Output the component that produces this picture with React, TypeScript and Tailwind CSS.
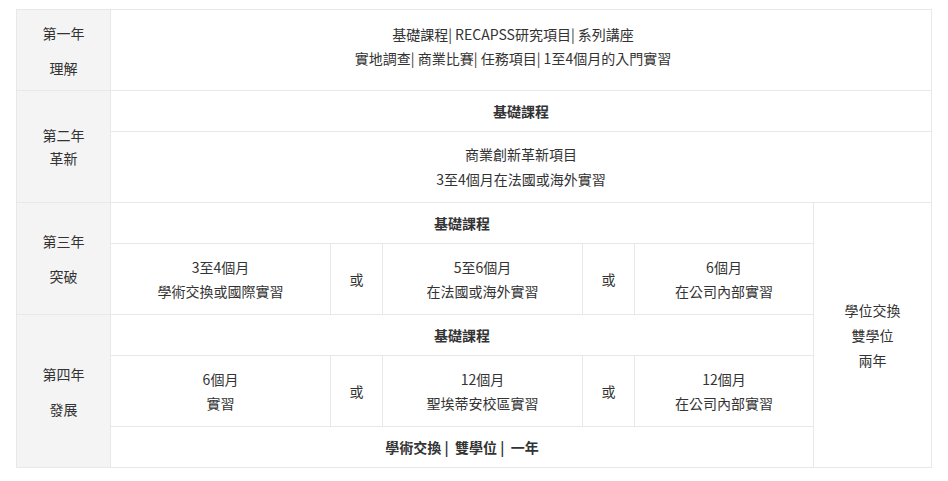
import React from "react";

const cell = "border border-[#e8e8e8] text-center align-middle p-0";
const left = "border border-[#e8e8e8] bg-[#f4f4f4] text-center align-middle p-0";

export default function App() {
  return (
    <div className="bg-white w-[948px] h-[481px] pt-[9px] pl-[16px] text-[14px] text-[#333] leading-[24px]" style={{ fontFamily: '"Noto Sans CJK TC", "Noto Sans", sans-serif' }}>
      <table className="table-fixed border-collapse w-[915px]">
        <colgroup>
          <col className="w-[94px]" />
          <col className="w-[220px]" />
          <col className="w-[52px]" />
          <col className="w-[200px]" />
          <col className="w-[52px]" />
          <col className="w-[179px]" />
          <col className="w-[118px]" />
        </colgroup>
        <tbody>
          <tr className="h-[81px]">
            <td className={left}>
              <div>第一年</div>
              <div className="mt-[11px]">理解</div>
            </td>
            <td className={cell + " pr-[16px] pb-[9px]"} colSpan={6}>
              <div>基礎課程| RECAPSS研究項目| 系列講座</div>
              <div>實地調查| 商業比賽| 任務項目| 1至4個月的入門實習</div>
            </td>
          </tr>
          <tr className="h-[41px]">
            <td className={left} rowSpan={2}>
              <div>第二年</div>
              <div className="-mt-[1px]">革新</div>
            </td>
            <td className={cell + " font-bold"} colSpan={6}>基礎課程</td>
          </tr>
          <tr className="h-[71px]">
            <td className={cell + " leading-[25px]"} colSpan={6}>
              <div>商業創新革新項目</div>
              <div>3至4個月在法國或海外實習</div>
            </td>
          </tr>
          <tr className="h-[41px]">
            <td className={left} rowSpan={2}>
              <div>第三年</div>
              <div className="mt-[11px]">突破</div>
            </td>
            <td className={cell + " font-bold"} colSpan={5}>基礎課程</td>
            <td className={cell + " leading-[25px]"} rowSpan={5}>
              <div>學位交換</div>
              <div>雙學位</div>
              <div>兩年</div>
            </td>
          </tr>
          <tr className="h-[71px]">
            <td className={cell}>
              <div>3至4個月</div>
              <div>學術交換或國際實習</div>
            </td>
            <td className={cell}>或</td>
            <td className={cell}>
              <div>5至6個月</div>
              <div>在法國或海外實習</div>
            </td>
            <td className={cell}>或</td>
            <td className={cell}>
              <div>6個月</div>
              <div>在公司內部實習</div>
            </td>
          </tr>
          <tr className="h-[41px]">
            <td className={left} rowSpan={3}>
              <div>第四年</div>
              <div className="mt-[11px]">發展</div>
            </td>
            <td className={cell + " font-bold"} colSpan={5}>基礎課程</td>
          </tr>
          <tr className="h-[71px]">
            <td className={cell}>
              <div>6個月</div>
              <div>實習</div>
            </td>
            <td className={cell}>或</td>
            <td className={cell}>
              <div>12個月</div>
              <div>聖埃蒂安校區實習</div>
            </td>
            <td className={cell}>或</td>
            <td className={cell}>
              <div>12個月</div>
              <div>在公司內部實習</div>
            </td>
          </tr>
          <tr className="h-[41px]">
            <td className={cell + " font-bold"} colSpan={5}>學術交換 |&nbsp; 雙學位 |&nbsp; 一年</td>
          </tr>
        </tbody>
      </table>
    </div>
  );
}
